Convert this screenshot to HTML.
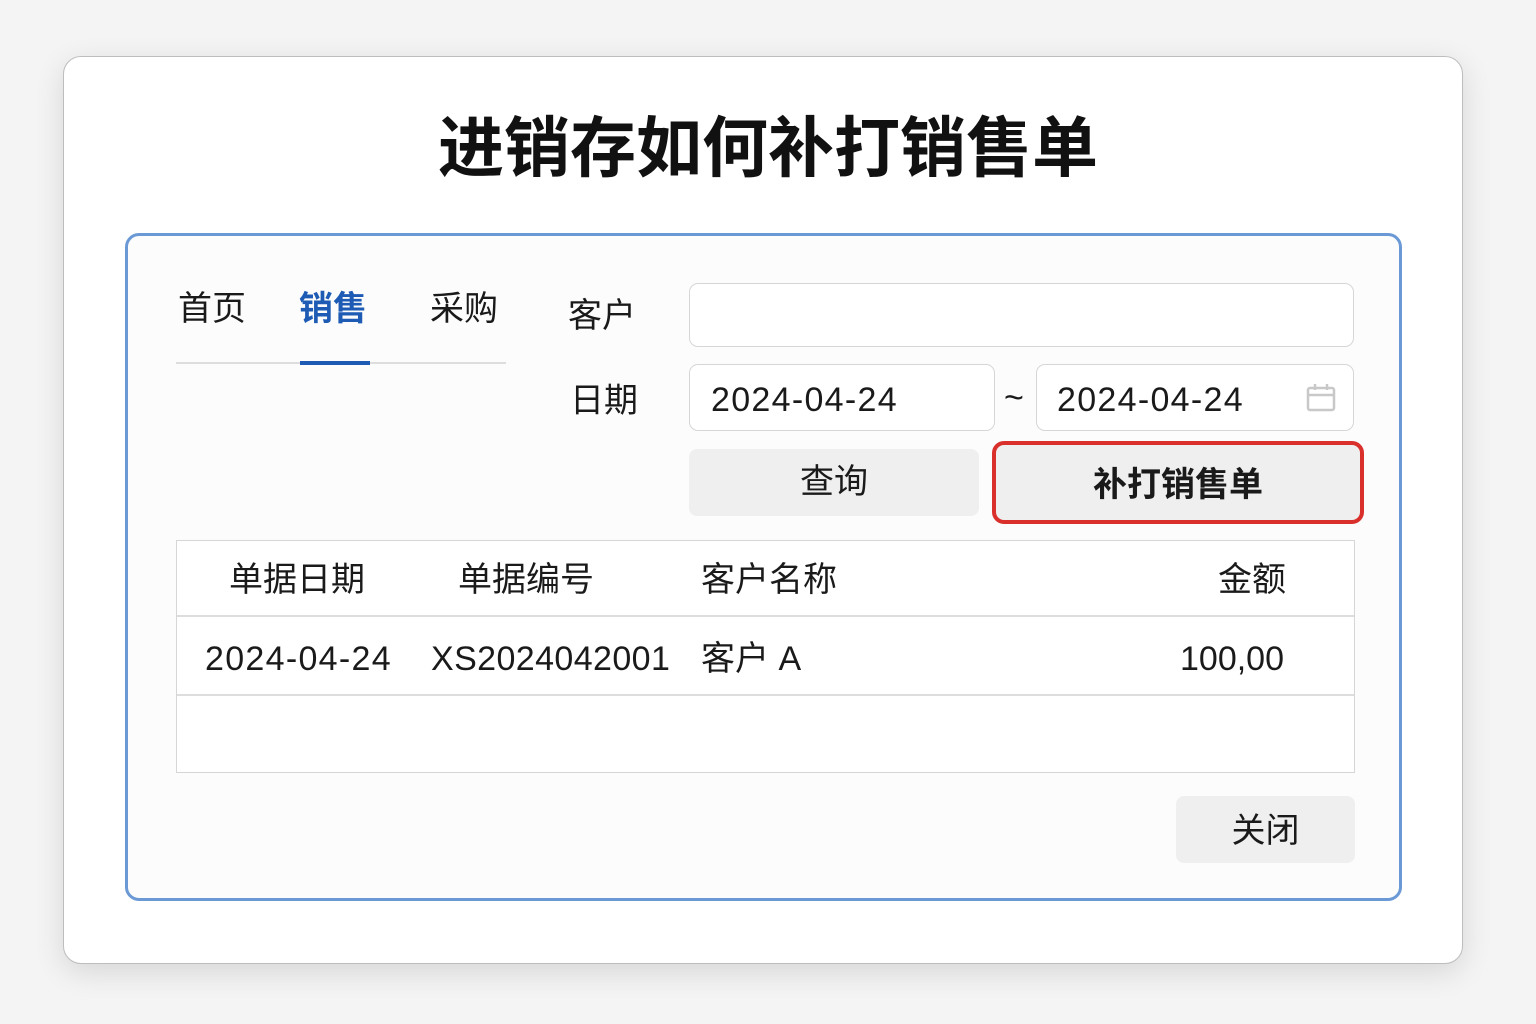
<!DOCTYPE html>
<html><head><meta charset="utf-8"><style>
*{box-sizing:border-box;margin:0;padding:0}
body{width:1536px;height:1024px;background:#f4f4f4;font-family:"Liberation Sans","Noto Sans CJK SC",sans-serif;color:#1a1a1a;position:relative;overflow:hidden}
.abs{position:absolute}
.card{left:63px;top:56px;width:1400px;height:908px;background:#fff;border:1px solid #bdbdbd;border-radius:18px;box-shadow:0 8px 30px rgba(0,0,0,.12)}
h1{position:absolute;left:0;width:1536px;top:106px;text-align:center;font-size:66px;font-weight:bold;color:#111;line-height:84px;letter-spacing:0px}
.panel{left:125px;top:233px;width:1277px;height:668px;border:3px solid #6a99d6;border-radius:14px;background:#fcfcfc}
.t{font-size:34px;line-height:40px}
.n{letter-spacing:1.3px}
.inp{background:#fff;border:1.5px solid #d6d6d6;border-radius:9px}
.btn{background:#efefef;border-radius:8px;text-align:center}
</style></head><body>
<div class="abs card"></div>
<h1>进销存如何补打销售单</h1>
<div class="abs panel"></div>
<div class="abs t" style="left:178px;top:289px">首页</div>
<div class="abs t" style="left:299px;top:289px;color:#1d5bb5;font-weight:bold">销售</div>
<div class="abs t" style="left:430px;top:289px">采购</div>
<div class="abs" style="left:176px;top:362px;width:330px;height:2px;background:#ddd"></div>
<div class="abs" style="left:300px;top:361px;width:70px;height:4px;background:#1d5bb5"></div>
<div class="abs t" style="left:568px;top:296px">客户</div>
<div class="abs inp" style="left:689px;top:283px;width:665px;height:64px"></div>
<div class="abs t" style="left:570px;top:381px">日期</div>
<div class="abs inp" style="left:689px;top:364px;width:306px;height:67px"></div>
<div class="abs t n" style="left:711px;top:380px">2024-04-24</div>
<div class="abs t" style="left:1004px;top:378px">~</div>
<div class="abs inp" style="left:1036px;top:364px;width:318px;height:67px"></div>
<div class="abs t n" style="left:1057px;top:380px">2024-04-24</div>
<svg class="abs" style="left:1305px;top:382px" width="32" height="32" viewBox="0 0 32 32" fill="none" stroke="#c8c8c8" stroke-width="2.5"><rect x="3" y="6" width="26" height="22" rx="2"/><line x1="3" y1="13" x2="29" y2="13"/><line x1="10" y1="2" x2="10" y2="8"/><line x1="22" y1="2" x2="22" y2="8"/></svg>
<div class="abs btn t" style="left:689px;top:449px;width:290px;height:67px;line-height:67px">查询</div>
<div class="abs btn t" style="left:992px;top:441px;width:372px;height:83px;line-height:81px;border:4px solid #d9302c;border-radius:12px;font-weight:bold">补打销售单</div>
<div class="abs" style="left:176px;top:540px;width:1179px;height:233px;border:1.5px solid #d6d6d6;background:#fff"></div>
<div class="abs" style="left:177px;top:615px;width:1177px;height:1.5px;background:#ddd"></div>
<div class="abs" style="left:177px;top:694px;width:1177px;height:1.5px;background:#ddd"></div>
<div class="abs t" style="left:229px;top:560px">单据日期</div>
<div class="abs t" style="left:458px;top:560px">单据编号</div>
<div class="abs t" style="left:701px;top:560px">客户名称</div>
<div class="abs t" style="left:1218px;top:560px">金额</div>
<div class="abs t n" style="left:205px;top:639px">2024-04-24</div>
<div class="abs t" style="left:431px;top:639px;letter-spacing:0.4px">XS2024042001</div>
<div class="abs t" style="left:701px;top:639px">客户 A</div>
<div class="abs t" style="left:1180px;top:639px">100,00</div>
<div class="abs btn t" style="left:1176px;top:796px;width:179px;height:67px;line-height:71px">关闭</div>
</body></html>
